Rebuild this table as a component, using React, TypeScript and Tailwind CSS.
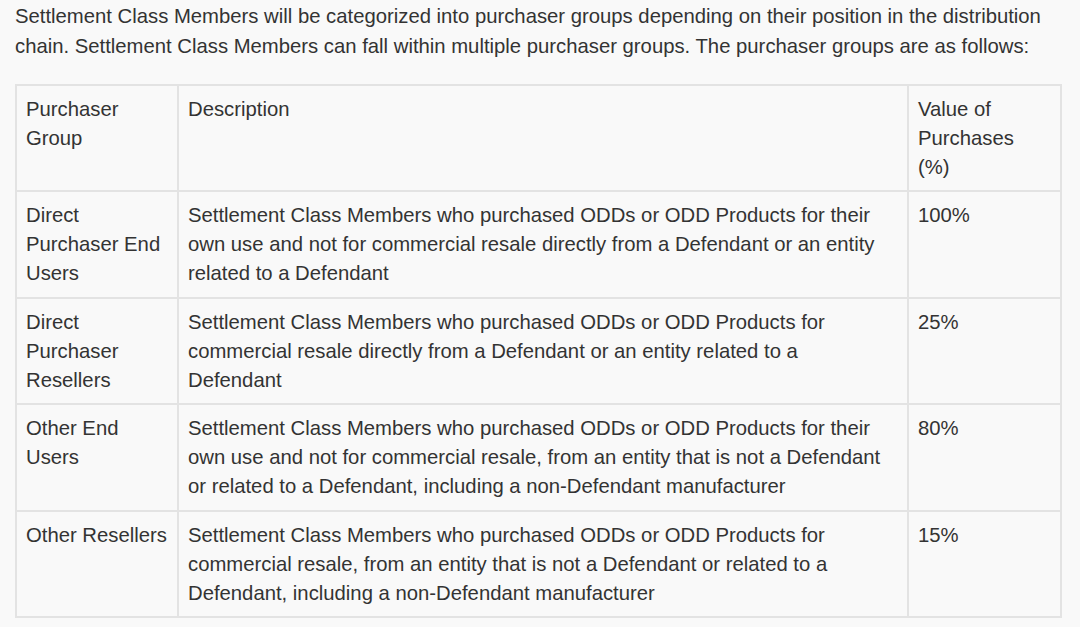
import React from "react";

const rows = [
  {
    group: ["Direct", "Purchaser End", "Users"],
    desc: [
      "Settlement Class Members who purchased ODDs or ODD Products for their",
      "own use and not for commercial resale directly from a Defendant or an entity",
      "related to a Defendant",
    ],
    value: ["100%"],
  },
  {
    group: ["Direct", "Purchaser", "Resellers"],
    desc: [
      "Settlement Class Members who purchased ODDs or ODD Products for",
      "commercial resale directly from a Defendant or an entity related to a",
      "Defendant",
    ],
    value: ["25%"],
  },
  {
    group: ["Other End", "Users"],
    desc: [
      "Settlement Class Members who purchased ODDs or ODD Products for their",
      "own use and not for commercial resale, from an entity that is not a Defendant",
      "or related to a Defendant, including a non-Defendant manufacturer",
    ],
    value: ["80%"],
  },
  {
    group: ["Other Resellers"],
    desc: [
      "Settlement Class Members who purchased ODDs or ODD Products for",
      "commercial resale, from an entity that is not a Defendant or related to a",
      "Defendant, including a non-Defendant manufacturer",
    ],
    value: ["15%"],
  },
];

const cell = "border-2 border-[#e3e3e3] px-[9px] pt-[9px] pb-[8.4px] align-top whitespace-nowrap";

function Lines({ lines }: { lines: string[] }) {
  return (
    <>
      {lines.map((l, i) => (
        <React.Fragment key={i}>
          {i > 0 && <br />}
          {l}
        </React.Fragment>
      ))}
    </>
  );
}

export default function App() {
  return (
    <div className="min-h-[627px] w-full bg-[#f9f9f9] px-[15px] pt-px text-[20.3px] leading-[29px] text-[#333] font-['Liberation_Sans',Arial,sans-serif]">
      <p className="mb-[23px] whitespace-nowrap leading-[30px]">
        Settlement Class Members will be categorized into purchaser groups depending on their position in the distribution
        <br />
        chain. Settlement Class Members can fall within multiple purchaser groups. The purchaser groups are as follows:
      </p>
      <table className="w-[1045px] table-fixed border-collapse">
        <colgroup>
          <col className="w-[162px]" />
          <col className="w-[730px]" />
          <col className="w-[153px]" />
        </colgroup>
        <tbody>
          <tr>
            <td className={cell}>
              <Lines lines={["Purchaser", "Group"]} />
            </td>
            <td className={cell}>Description</td>
            <td className={cell}>
              <Lines lines={["Value of", "Purchases", "(%)"]} />
            </td>
          </tr>
          {rows.map((r) => (
            <tr key={r.group.join(" ")}>
              <td className={cell}>
                <Lines lines={r.group} />
              </td>
              <td className={cell}>
                <Lines lines={r.desc} />
              </td>
              <td className={cell}>
                <Lines lines={r.value} />
              </td>
            </tr>
          ))}
        </tbody>
      </table>
    </div>
  );
}
